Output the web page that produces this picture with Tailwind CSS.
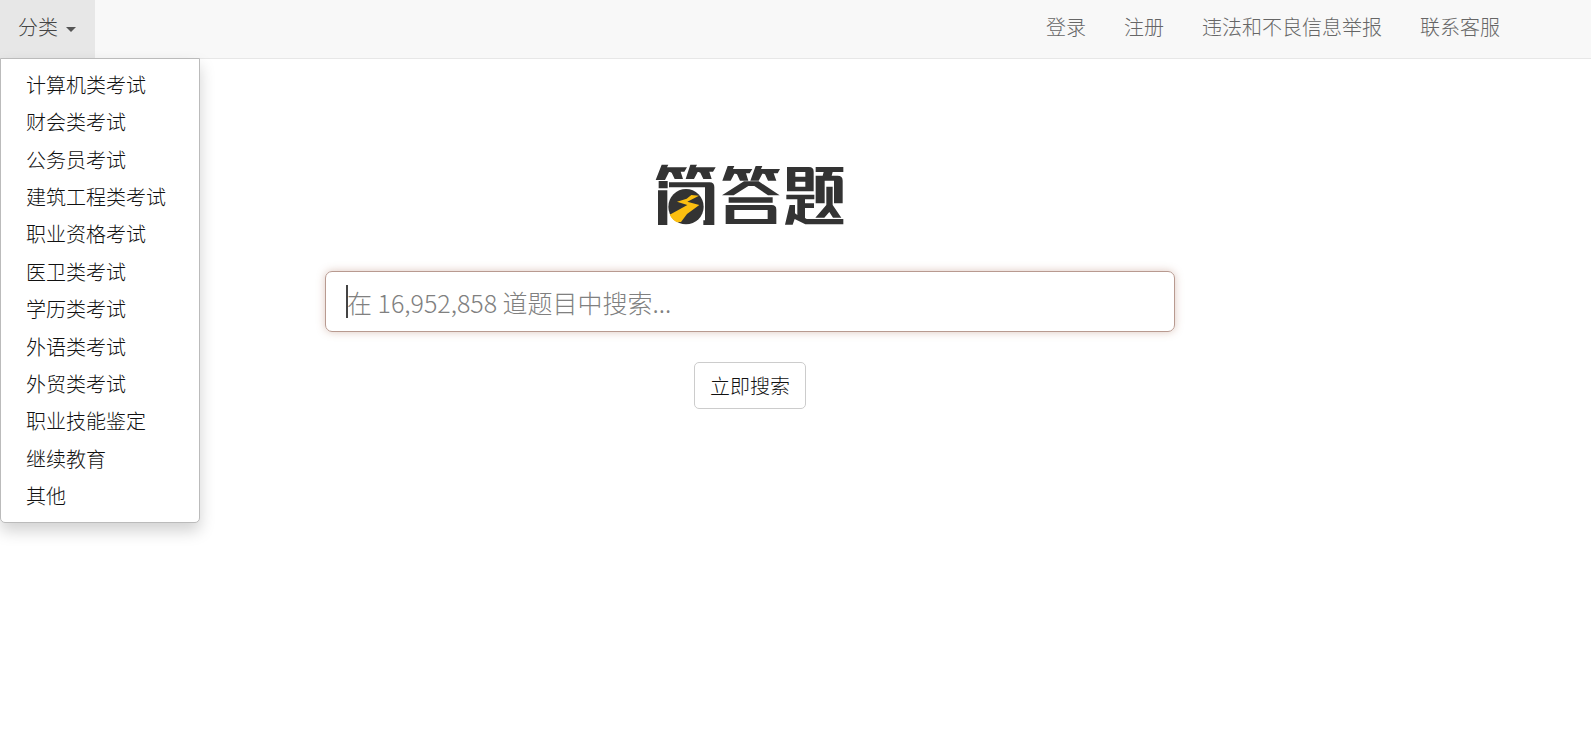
<!DOCTYPE html>
<html lang="zh-CN">
<head>
<meta charset="utf-8">
<meta name="viewport" content="width=device-width, initial-scale=1">
<title>简答题</title>
<script src="https://cdn.jsdelivr.net/npm/@tailwindcss/browser@4"></script>
</head>
<body class="min-h-screen bg-white font-['Noto_Sans_CJK_SC',sans-serif] text-xl font-light text-[#111]">
<header class="border-b border-[#e7e7e7] bg-[#f8f8f8]">
  <nav class="flex h-[58px] items-stretch justify-between pr-18">
    <div class="relative flex">
      <button type="button" aria-expanded="true" aria-controls="categories" class="flex items-center gap-2 bg-[#e7e7e7] pr-[19px] pb-1 pl-[18px] text-[#444]">分类
        <span class="mt-1 border-x-5 border-t-5 border-x-transparent border-t-[#555]"></span>
      </button>
      <ul id="categories" class="absolute top-full left-0 z-10 grid h-[465px] w-[200px] rounded-b-[5px] border border-[#bbb] bg-white py-[7px] shadow-[0_8px_16px_rgba(0,0,0,0.18)]">
        <li class="flex items-center px-[25px]"><a href="#">计算机类考试</a></li>
        <li class="flex items-center px-[25px]"><a href="#">财会类考试</a></li>
        <li class="flex items-center px-[25px]"><a href="#">公务员考试</a></li>
        <li class="flex items-center px-[25px]"><a href="#">建筑工程类考试</a></li>
        <li class="flex items-center px-[25px]"><a href="#">职业资格考试</a></li>
        <li class="flex items-center px-[25px]"><a href="#">医卫类考试</a></li>
        <li class="flex items-center px-[25px]"><a href="#">学历类考试</a></li>
        <li class="flex items-center px-[25px]"><a href="#">外语类考试</a></li>
        <li class="flex items-center px-[25px]"><a href="#">外贸类考试</a></li>
        <li class="flex items-center px-[25px]"><a href="#">职业技能鉴定</a></li>
        <li class="flex items-center px-[25px]"><a href="#">继续教育</a></li>
        <li class="flex items-center px-[25px]"><a href="#">其他</a></li>
      </ul>
    </div>
    <div class="flex items-center pb-1 text-[#666]">
      <a href="#" class="px-[19px]">登录</a>
      <a href="#" class="px-[19px]">注册</a>
      <a href="#" class="px-[19px]">违法和不良信息举报</a>
      <a href="#" class="px-[19px]">联系客服</a>
    </div>
  </nav>
</header>
<main class="flex flex-col items-center pt-[105px] pr-[91px]">
  <svg role="img" aria-label="简答题" class="h-[62px] w-[190px]" viewBox="46 42 570 186">
    <g fill="#333">
      <path d="M66 44H86L82 52H142L134 65H123L130 87H105L96 68L91 66H88L76 90H48Z"/>
      <path d="M152 44H172L168 52H228L220 65H209L216 87H191L182 68L177 66H174L163 87H138Z"/>
      <path d="M57 93H84V115H57ZM55 121H83V225H55ZM88 97H210Q224 97 224 111V225H191V211H196V112H88Z"/>
      <circle cx="139" cy="170" r="53"/>
      <path d="M264 48H284L280 57H338L330 70H319L326 92H301L292 73L287 71H284L273 92H248Z"/>
      <path d="M348 48H368L364 57H421L414 70H402L410 92H385L376 73L371 71H368L357 92H332Z"/>
      <path d="M313 94H357L420 136H385L344 108H326L282 136H247ZM267 142H399V158H267ZM258 165H396Q410 165 410 179V222H258ZM284 180V207H384V180Z"/>
      <path fill-rule="evenodd" d="M442 51H508Q522 51 522 65V124H442ZM467 66V80H497V66ZM467 95V110H497V95Z"/>
      <path d="M440 134H524V148H496V160H523V174H496V204L501 207H611V223H497L465 207L459 224H436L450 165H466V190L473 195V148H440Z"/>
      <path d="M528 51H611V66H579L576 77H594Q609 77 609 92V160H583V92H555V160H528V77H549L552 66H528ZM560 110H579V165L605 203H580L569 186L554 203H527L560 165Z"/>
    </g>
    <path fill="#fcbf10" d="M155 135 141 146 112 155 143 165 116 180 90 194Q98 210 112 217L124 216 142 192 179 165 143 155 178 137Z"/>
  </svg>
  <form class="mt-[45px] flex w-full flex-col items-center" onsubmit="return false">
    <div class="relative w-full max-w-[850px]">
      <input type="search" aria-label="搜索题目" placeholder="在 16,952,858 道题目中搜索..." class="block h-[61px] w-full rounded-[7px] border border-[#b89a90] px-[21px] text-[25px] font-light shadow-[0_0_8px_rgba(180,130,110,0.45)] outline-none placeholder:text-[#808080]">
      <span aria-hidden="true" class="absolute top-[14px] left-[21px] h-[33px] w-[2px] bg-[#444]"></span>
    </div>
    <button type="submit" class="mt-[30px] h-[47px] rounded-[5px] border border-[#ccc] bg-white px-[15px]">立即搜索</button>
  </form>
</main>
</body>
</html>
